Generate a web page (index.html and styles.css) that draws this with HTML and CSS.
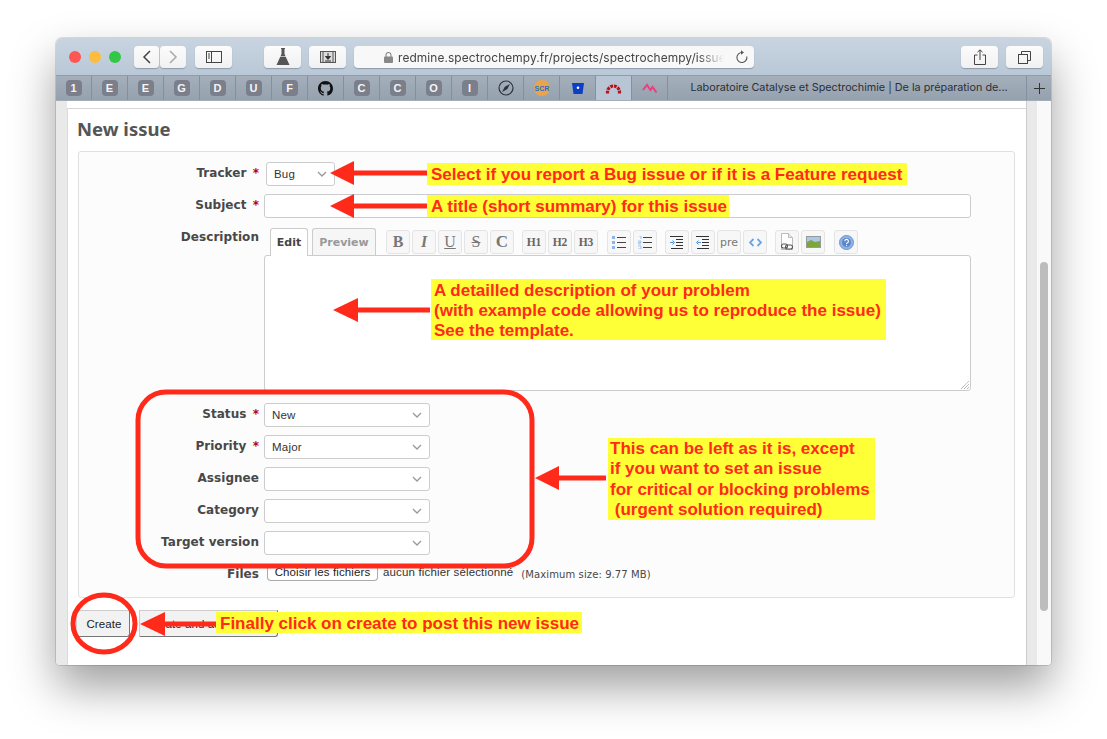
FILE: index.html
```html
<!DOCTYPE html>
<html lang="en">
<head>
<meta charset="utf-8">
<title>New issue</title>
<link rel="stylesheet" href="styles.css">
</head>
<body>
<div class="window">
  <header class="titlebar">
    <div class="lights"><i class="light red"></i><i class="light amber"></i><i class="light green"></i></div>
    <div class="nav">
      <button class="tb tb-nav"><svg width="10" height="16" viewBox="0 0 10 16"><path d="M8 2 2 8l6 6" fill="none" stroke="#444" stroke-width="1.5"/></svg></button>
      <button class="tb tb-nav tb-fwd"><svg width="10" height="16" viewBox="0 0 10 16"><path d="m2 2 6 6-6 6" fill="none" stroke="#aaa" stroke-width="1.5"/></svg></button>
    </div>
    <button class="tb tb-wide tb-side"><svg width="16" height="12" viewBox="0 0 16 12"><rect x=".5" y=".5" width="15" height="11" fill="none" stroke="#444"/><path d="M5.500 0v12M2 3h2M2 5h2M2 7h2" stroke="#444" fill="none"/></svg></button>
    <button class="tb tb-wide tb-flask"><svg width="14" height="18" viewBox="0 0 14 18"><path d="M5 0h4v1H8.500v5l5 11H.5l5-11V1H5z" fill="#555"/><path d="M3.500 8.500h7" stroke="#fff" stroke-width=".6"/></svg></button>
    <button class="tb tb-wide tb-film"><svg width="16" height="12" viewBox="0 0 16 12"><rect x=".5" y=".5" width="15" height="11" fill="#ddd" stroke="#555"/><path d="M3 0v12M13 0v12" stroke="#555"/><path d="M8 2v4M5.500 5.500 8 8.500l2.500-3z" stroke="#333" fill="#333"/><path d="M5 10h6" stroke="#333"/></svg></button>
    <div class="url">
      <svg class="lock" width="9" height="11" viewBox="0 0 9 11"><path d="M2 5V3a2.500 2.500 0 0 1 5 0v2" fill="none" stroke="#888" stroke-width="1.100"/><rect y="4.500" width="9" height="6.500" rx="1" fill="#888"/></svg>
      <span class="url-text">redmine.spectrochempy.fr/projects/spectrochempy/issue</span>
      <svg class="reload" width="13" height="14" viewBox="0 0 13 14"><path d="M7 2.500a5 5 0 1 0 4.800 4" fill="none" stroke="#555" stroke-width="1.100"/><path d="M6 .3 9 2.500 6 4.700z" fill="#555"/></svg>
    </div>
    <button class="tb tb-wide tb-share"><svg width="12" height="16" viewBox="0 0 12 16"><path d="M3.500 6H.5v9.500h11V6h-3M6 11V1M3.500 3.200 6 .8l2.500 2.400" fill="none" stroke="#444"/></svg></button>
    <button class="tb tb-wide"><svg width="13" height="13" viewBox="0 0 13 13"><path d="M3.500 3V.5h9v9H10" fill="none" stroke="#444"/><rect x=".5" y="3.500" width="9" height="9" fill="none" stroke="#444"/></svg></button>
  </header>

  <nav class="tabs">
    <div class="tab"><b class="fav">1</b></div>
    <div class="tab"><b class="fav">E</b></div>
    <div class="tab"><b class="fav">E</b></div>
    <div class="tab"><b class="fav">G</b></div>
    <div class="tab"><b class="fav">D</b></div>
    <div class="tab"><b class="fav">U</b></div>
    <div class="tab"><b class="fav">F</b></div>
    <div class="tab"><svg width="15" height="15" viewBox="0 0 16 16"><path d="M8 0C3.580 0 0 3.580 0 8c0 3.540 2.290 6.530 5.470 7.590.4.07.55-.17.55-.38 0-.19-.01-.82-.01-1.490-2.010.37-2.530-.49-2.690-.94-.09-.23-.48-.94-.82-1.130-.28-.15-.68-.52-.01-.53.63-.01 1.080.58 1.230.82.72 1.210 1.870.87 2.330.66.07-.52.28-.87.51-1.070-1.780-.2-3.640-.89-3.640-3.950 0-.87.31-1.590.82-2.150-.08-.2-.36-1.020.08-2.120 0 0 .67-.21 2.200.82.64-.18 1.320-.27 2-.27.68 0 1.360.09 2 .27 1.530-1.040 2.200-.82 2.200-.82.44 1.100.16 1.920.08 2.120.51.56.82 1.270.82 2.150 0 3.070-1.870 3.750-3.650 3.950.29.25.54.73.54 1.480 0 1.070-.01 1.930-.01 2.200 0 .21.15.46.55.38A8.013 8.013 0 0 0 16 8c0-4.420-3.580-8-8-8z" fill="#111"/></svg></div>
    <div class="tab"><b class="fav">C</b></div>
    <div class="tab"><b class="fav">C</b></div>
    <div class="tab"><b class="fav">O</b></div>
    <div class="tab"><b class="fav">I</b></div>
    <div class="tab"><svg width="16" height="16" viewBox="0 0 16 16"><circle cx="8" cy="8" r="7" fill="none" stroke="#2c3440" stroke-width="1.200"/><path d="M12 4 9.200 9.200 4 12l2.800-5.200z" fill="#2c3440"/></svg></div>
    <div class="tab"><svg width="16" height="16" viewBox="0 0 16 16"><circle cx="8" cy="8" r="8" fill="#eaa54a"/><text x="8" y="10.500" class="scr">SCR</text></svg></div>
    <div class="tab"><svg width="12" height="11" viewBox="0 0 12 11"><path d="M0 0h12l-1.500 11h-9z" fill="#0b3fc4"/><circle cx="6" cy="4.800" r="1.300" fill="#fff"/></svg></div>
    <div class="tab tab-active"><svg width="17" height="12" viewBox="0 0 17 12"><path d="M2.500 11.500V10A6 6 0 0 1 14.500 10v1.500" fill="none" stroke="#b5121e" stroke-width="3.200" stroke-dasharray="2.800 .9"/></svg></div>
    <div class="tab"><svg width="16" height="11" viewBox="0 0 16 11"><path d="M1 7 5 2l3.500 5L10.500 4l4 5.500" fill="none" stroke="#e8407f" stroke-width="2"/></svg></div>
    <div class="tab-title">Laboratoire Catalyse et Spectrochimie | De la préparation de...</div>
    <div class="tab-plus"><svg width="11" height="11" viewBox="0 0 11 11"><path d="M5.500 0v11M0 5.500h11" stroke="#333"/></svg></div>
  </nav>

  <div class="viewport">
    <div class="gutter"></div>
    <main class="page">
      <h2 class="title">New issue</h2>
      <form class="box">
        <div class="row row-tracker">
          <label class="lbl">Tracker <em>*</em></label>
          <div class="select select-tracker"><span>Bug</span><svg class="chev" width="10" height="6" viewBox="0 0 10 6"><path d="m1 1 4 4 4-4" fill="none" stroke="#999" stroke-width="1.300"/></svg></div>
        </div>
        <div class="row row-subject">
          <label class="lbl">Subject <em>*</em></label>
          <div class="field"></div>
        </div>
        <div class="row row-desc">
          <label class="lbl lbl-desc">Description</label>
          <div class="editor">
            <div class="toolbar">
              <div class="etabs"><span class="etab on">Edit</span><span class="etab">Preview</span></div>
              <div class="tools">
                <span class="tool serif bold">B</span><span class="tool serif ital">I</span><span class="tool serif under">U</span><span class="tool serif strike">S</span><span class="tool serif bold big">C</span>
                <span class="tool serif h sep">H1</span><span class="tool serif h">H2</span><span class="tool serif h">H3</span>
                <span class="tool sep-wide"><svg width="14" height="13" viewBox="0 0 14 13"><path d="M0 0h3v3H0zM0 5h3v3H0zM0 10h3v3H0z" fill="#8fb4e8"/><path d="M5 1.500h9M5 6.500h9M5 11.500h9" stroke="#444"/></svg></span>
                <span class="tool"><svg width="14" height="13" viewBox="0 0 14 13"><path d="M1 0h2v3M0 5h3v1.500H0V8h3M0 10h3v3H0" fill="none" stroke="#8fb4e8" stroke-width=".8"/><path d="M5 1.500h9M5 6.500h9M5 11.500h9" stroke="#444"/></svg></span>
                <span class="tool sep"><svg width="14" height="13" viewBox="0 0 14 13"><path d="M0 .5h13M6 3.500h7M6 6.500h7M6 9.500h7M1 12.500h12" stroke="#333"/><path d="M0 6.500h3.500M2.500 4.500l2 2-2 2" stroke="#4a90d9" fill="none"/></svg></span>
                <span class="tool"><svg width="14" height="13" viewBox="0 0 14 13"><path d="M0 .5h13M6 3.500h7M6 6.500h7M6 9.500h7M1 12.500h12" stroke="#333"/><path d="M5 6.500H1.500M2.500 4.500l-2 2 2 2" stroke="#4a90d9" fill="none"/></svg></span>
                <span class="tool pre">pre</span>
                <span class="tool"><svg width="13" height="9" viewBox="0 0 13 9"><path d="M4.500 1 1 4.500 4.500 8M8.500 1 12 4.500 8.500 8" fill="none" stroke="#6aa5e8" stroke-width="1.800"/></svg></span>
                <span class="tool sep"><svg width="14" height="18" viewBox="0 0 14 18"><path d="M1.500.5h7l4 4v12h-11z" fill="#fff" stroke="#bbb"/><path d="M8.500.5v4h4" fill="#e8e8e8" stroke="#bbb"/><rect x="1.500" y="11" width="6" height="4" rx="2" fill="none" stroke="#555" stroke-width="1.100"/><rect x="5.500" y="12" width="7" height="4" rx="2" fill="none" stroke="#555" stroke-width="1.100"/></svg></span>
                <span class="tool"><svg width="15" height="12" viewBox="0 0 15 12"><rect width="15" height="12" fill="#999"/><rect x="1" y="1" width="13" height="5" fill="#a9c9e8"/><path d="M1 11V6l4-2 4 2 5-1v6z" fill="#7da53a"/></svg></span>
                <span class="tool sep-wide"><svg width="15" height="15" viewBox="0 0 15 15"><circle cx="7.500" cy="7.500" r="7" fill="#8fb4e8" stroke="#6d94cc"/><circle cx="7.500" cy="7.500" r="4.500" fill="#5e86c4"/><path d="M5.800 6.200a1.800 1.800 0 1 1 2.400 1.700c-.5.2-.7.500-.7 1M7.500 10v1" stroke="#fff" fill="none" stroke-width="1.100"/></svg></span>
              </div>
            </div>
            <div class="textarea"><svg class="grip" width="8" height="8" viewBox="0 0 8 8"><path d="M0 8l8-8M3 8l5-5M6 8l2-2" stroke="#777" stroke-width=".8" stroke-dasharray="1 .6"/></svg></div>
          </div>
        </div>
        <div class="row row-attr row-first"><label class="lbl">Status <em>*</em></label><div class="select"><span>New</span><svg class="chev" width="10" height="6" viewBox="0 0 10 6"><path d="m1 1 4 4 4-4" fill="none" stroke="#999" stroke-width="1.300"/></svg></div></div>
        <div class="row row-attr"><label class="lbl">Priority <em>*</em></label><div class="select"><span>Major</span><svg class="chev" width="10" height="6" viewBox="0 0 10 6"><path d="m1 1 4 4 4-4" fill="none" stroke="#999" stroke-width="1.300"/></svg></div></div>
        <div class="row row-attr"><label class="lbl">Assignee</label><div class="select"><span></span><svg class="chev" width="10" height="6" viewBox="0 0 10 6"><path d="m1 1 4 4 4-4" fill="none" stroke="#999" stroke-width="1.300"/></svg></div></div>
        <div class="row row-attr"><label class="lbl">Category</label><div class="select"><span></span><svg class="chev" width="10" height="6" viewBox="0 0 10 6"><path d="m1 1 4 4 4-4" fill="none" stroke="#999" stroke-width="1.300"/></svg></div></div>
        <div class="row row-attr"><label class="lbl">Target version</label><div class="select"><span></span><svg class="chev" width="10" height="6" viewBox="0 0 10 6"><path d="m1 1 4 4 4-4" fill="none" stroke="#999" stroke-width="1.300"/></svg></div></div>
        <div class="row row-files">
          <label class="lbl lbl-files">Files</label>
          <span class="file-btn">Choisir les fichiers</span>
          <span class="file-none">aucun fichier sélectionné</span>
          <span class="file-max">(Maximum size: 9.77 MB)</span>
        </div>
      </form>
      <div class="actions">
        <span class="btn btn-create">Create</span>
        <span class="btn btn-more">Create and add another</span>
      </div>
    </main>
    <div class="gutter gutter-right"></div>
    <div class="track"><div class="thumb"></div></div>
  </div>
</div>

<div class="annotations">
  <svg class="marks" width="1107" height="739" viewBox="0 0 1107 739">
    <g fill="#ff2a1a">
      <path d="M330 173 354 161v9.500h73v5h-73V185z"/>
      <path d="M330 206 354 194v9.500h73v5h-73V218z"/>
      <path d="M333 310 358 298v9.500h72v5h-72V322z"/>
      <path d="M535 478 559 466v9.500h47v5h-47V490z"/>
      <path d="M140 624 165 612v9.500h52v5h-52V636z"/>
    </g>
    <rect x="138" y="392" width="394" height="174" rx="28" fill="none" stroke="#ff2a1a" stroke-width="5"/>
    <ellipse cx="104" cy="623.500" rx="31" ry="28.500" fill="none" stroke="#ff2a1a" stroke-width="5"/>
  </svg>
  <div class="note note-1">Select if you report a Bug issue or if it is a Feature request</div>
  <div class="note note-2">A title (short summary) for this issue</div>
  <div class="note note-3">A detailled description of your problem<br>(with example code allowing us to reproduce the issue)<br>See the template.</div>
  <div class="note note-4">This can be left as it is, except<br>if you want to set an issue<br>for critical or blocking problems<br>&nbsp;(urgent solution required)</div>
  <div class="note note-5">Finally click on create to post this new issue</div>
</div>
</body>
</html>
```
FILE: styles.css
```css
* { box-sizing: border-box; }
html, body { margin: 0; padding: 0; }
body {
  width: 1107px;
  height: 739px;
  padding: 38px 56px 74px;
  background: #fff;
  overflow: hidden;
  position: relative;
  font-family: "Liberation Sans", Arial, sans-serif;
}
button { padding: 0; font: inherit; }

.window {
  width: 995px;
  height: 627px;
  display: flex;
  flex-direction: column;
  border-radius: 6px 6px 4px 4px;
  overflow: hidden;
  box-shadow: 0 0 0 1px rgba(0,0,0,.12), 0 22px 45px rgba(0,0,0,.38);
  background: #fff;
}

/* title bar */
.titlebar {
  height: 38px;
  flex: none;
  display: flex;
  align-items: flex-start;
  padding-top: 8px;
  background: linear-gradient(#c9d4e0, #b9c8d7);
  border-bottom: 1px solid #8f9ba8;
}
.lights { display: flex; gap: 8px; padding: 5px 0 0 13px; width: 78px; flex: none; }
.light { width: 12px; height: 12px; border-radius: 50%; display: block; }
.red { background: #fc5753; }
.amber { background: #fdbc40; }
.green { background: #33c748; }
.tb {
  height: 22px;
  border: 0;
  border-radius: 4px;
  background: linear-gradient(#fcfcfc, #f1f1f1);
  box-shadow: 0 1px 1px rgba(60,70,90,.35);
  display: flex;
  align-items: center;
  justify-content: center;
  flex: none;
}
.nav { display: flex; gap: 1px; flex: none; }
.tb-nav { width: 25px; }
.tb-fwd { width: 26px; }
.tb-wide { width: 37px; }
.tb-side { margin-left: 9px; }
.tb-flask { margin-left: 32px; }
.tb-film { margin-left: 8px; }
.tb-share { margin-left: 207px; }
.tb-share + .tb-wide { margin-left: 8px; }
.url {
  width: 400px;
  height: 22px;
  margin-left: 8px;
  flex: none;
  display: flex;
  align-items: center;
  background: #f8f8f8;
  border-radius: 4px;
  box-shadow: 0 1px 1px rgba(60,70,90,.35);
  padding-left: 30px;
  color: #444;
}
.lock { margin-right: 5px; flex: none; }
.url-text {
  font-family: "Inter", "Liberation Sans", sans-serif;
  font-size: 11.900px;
  white-space: nowrap;
  width: 326px;
  overflow: hidden;
  -webkit-mask-image: linear-gradient(90deg, #000 92%, transparent);
  mask-image: linear-gradient(90deg, #000 92%, transparent);
  letter-spacing: .1px;
}
.reload { margin-left: 11px; flex: none; }

/* tab strip */
.tabs {
  height: 25px;
  flex: none;
  display: flex;
  background: linear-gradient(#a4afbb, #95a1ae);
  border-bottom: 1px solid #a3adb8;
}
.tab {
  width: 36px;
  flex: none;
  display: flex;
  align-items: center;
  justify-content: center;
  border-right: 1px solid #84909d;
}
.tab-active { background: #b7c5d4; }
.fav {
  width: 16px;
  height: 16px;
  border-radius: 4px;
  background: #7b7f8b;
  color: #f4f4f4;
  font-size: 11px;
  line-height: 16px;
  text-align: center;
  font-weight: 700;
}
.scr { font: 700 7px "Liberation Sans", sans-serif; fill: #1f6fd0; text-anchor: middle; }
.tab-title {
  width: 359px;
  flex: none;
  padding-left: 4px;
  text-align: center;
  font-family: "Inter", "Liberation Sans", sans-serif;
  font-size: 10.800px;
  line-height: 24px;
  color: #2b2f36;
  white-space: nowrap;
  border-right: 1px solid #84909d;
}
.tab-plus { flex: 1; display: flex; align-items: center; justify-content: center; }

/* page viewport */
.viewport { flex: 1; min-height: 0; display: flex; }
.gutter { width: 11px; flex: none; background: #e9e9e9; }
.gutter-right { border-left: 1px solid #ccc; width: 11px; }
.track { width: 14px; flex: none; background: #f9f9f9; padding: 161px 3px 0; }
.thumb { width: 8px; height: 349px; background: #bdbdbd; border-radius: 4px; }
.page {
  width: 959px;
  flex: none;
  margin-top: 7px;
  padding: 0 11px 0 10px;
  background: #fff;
  border-top: 1px solid #d6d6d6;
  border-left: 1px solid #dcdcdc;
  color: #484848;
  font-family: "DejaVu Sans", Verdana, sans-serif;
}
.title {
  margin: 0 0 0 -1px;
  height: 42px;
  padding-top: 8px;
  font: 700 18.500px/24px "Noto Sans", "Open Sans", sans-serif;
  color: #555;
}

/* form */
.box {
  width: 937px;
  height: 447px;
  padding-top: 10px;
  background: #fcfcfc;
  border: 1px solid #e0e0e0;
  border-radius: 3px;
}
.row { display: flex; align-items: flex-start; }
.lbl {
  width: 180px;
  flex: none;
  text-align: right;
  font-size: 12px;
  font-weight: 700;
  line-height: 22px;
  letter-spacing: .05px;
  color: #484848;
  white-space: nowrap;
}
.lbl em { color: #bb0000; font-style: normal; margin-left: 2px; }
.select {
  width: 166px;
  height: 24px;
  margin-left: 5px;
  padding: 0 7px 0 7px;
  display: flex;
  align-items: center;
  justify-content: space-between;
  background: #fff;
  border: 1px solid #ccc;
  border-radius: 3px;
  font: 11.500px "Liberation Sans", Arial, sans-serif;
  letter-spacing: .2px;
  color: #333;
}
.select-tracker { width: 69px; margin-left: 7px; }
.row-subject { margin-top: 8px; }
.field { width: 707px; height: 24px; margin-left: 5px; background: #fff; border: 1px solid #ccc; border-radius: 3px; }
.row-desc { margin-top: 10px; }
.lbl-desc { line-height: 18px; }
.editor { width: 707px; margin-left: 5px; }
.toolbar { display: flex; align-items: flex-end; height: 27px; padding-left: 6px; }
.etabs { display: flex; gap: 4px; flex: none; align-self: flex-end; }
.etab {
  height: 27px;
  width: 64px;
  line-height: 27px;
  text-align: center;
  font-size: 11px;
  font-weight: 700;
  color: #999;
  background: #f6f6f6;
  border: 1px solid #ccc;
  border-bottom: 0;
  border-radius: 3px 3px 0 0;
}
.etab.on {
  width: 38px;
  height: 28px;
  margin-bottom: -1px;
  background: #fff;
  color: #444;
  position: relative;
  z-index: 1;
}
.tools { display: flex; gap: 2px; margin-left: 10px; padding-bottom: 1px; }
.tool {
  width: 24px;
  height: 24px;
  flex: none;
  display: flex;
  align-items: center;
  justify-content: center;
  background: #f7f7f7;
  border: 1px solid #e4e4e4;
  border-radius: 3px;
  color: #777;
  font-size: 11px;
}
.tool.sep { margin-left: 6px; }
.tool.sep-wide { margin-left: 7px; }
.serif { font-family: "Liberation Serif", serif; font-size: 16px; font-weight: 700; }
.ital { font-style: italic; }
.under { font-weight: 400; text-decoration: underline; }
.strike { text-decoration: line-through; font-weight: 400; }
.big { font-size: 17px; }
.serif.h { font-size: 11.500px; color: #666; }
.pre { font-size: 11px; font-family: "DejaVu Sans", sans-serif; }
.textarea {
  height: 136px;
  background: #fff;
  border: 1px solid #ccc;
  border-radius: 3px;
  display: flex;
  align-items: flex-end;
  justify-content: flex-end;
  padding: 0 1px 1px 0;
}
.row-attr { margin-top: 8px; }
.row-first { margin-top: 12px; }
.row-files { margin-top: 10px; align-items: center; height: 18px; }
.lbl-files { line-height: 18px; }
.file-btn {
  margin-left: 8px;
  width: 111px;
  height: 17px;
  margin-top: -3px;
  background: #fff;
  border: 1px solid #aaa;
  border-top: 0;
  border-radius: 0 0 4px 4px;
  font: 11.500px/17px "Liberation Sans", Arial, sans-serif;
  letter-spacing: .12px;
  text-align: center;
  color: #222;
}
.file-none { margin: -4px 0 0 5px; font: 11.500px/14px "Liberation Sans", Arial, sans-serif; letter-spacing: .15px; color: #333; white-space: nowrap; }
.file-max { margin: 0 0 0 8px; font-size: 10px; letter-spacing: .1px; color: #484848; white-space: nowrap; }

.actions { display: flex; gap: 9px; margin-top: 12px; }
.btn {
  height: 27px;
  flex: none;
  background: #f2f2f2;
  border: 1px solid #ccc;
  border-right-color: #777;
  border-bottom-color: #777;
  border-radius: 0 0 3px 0;
  font: 11.500px/26px "Liberation Sans", Arial, sans-serif;
  letter-spacing: .1px;
  color: #222;
  text-align: center;
}
.btn-create { width: 54px; margin-left: -2px; padding-left: 2px; }
.btn-more { width: 139px; }

/* annotations drawn on top of the screenshot */
.annotations { position: absolute; left: 0; top: 0; width: 1107px; height: 739px; pointer-events: none; }
.marks { position: absolute; left: 0; top: 0; }
.note {
  position: absolute;
  background: #ffff38;
  color: #ff2a1a;
  font: 700 17px/20px "Liberation Sans", Arial, sans-serif;
  white-space: nowrap;
}
.note-1 { left: 427px; top: 163px; width: 480px; height: 22px; padding: 2px 0 0 4px; }
.note-2 { left: 427px; top: 195px; width: 302px; height: 22px; padding: 2px 0 0 4px; }
.note-3 { left: 431px; top: 279px; width: 455px; height: 61px; padding: 2px 0 0 3px; }
.note-4 { left: 608px; top: 438px; width: 267px; height: 82px; padding: 1px 0 0 2px; line-height: 20.300px; }
.note-5 { left: 216px; top: 612px; width: 366px; height: 21px; padding: 2px 0 0 4px; line-height: 19px; }
```
